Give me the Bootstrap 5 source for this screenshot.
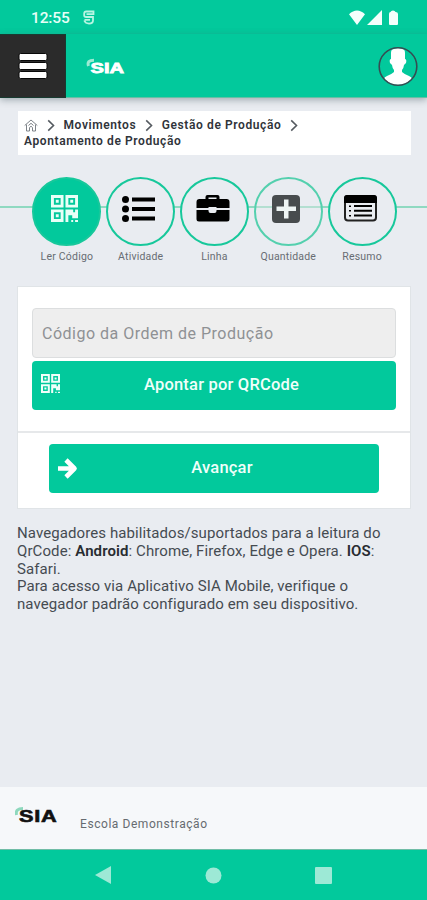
<!DOCTYPE html>
<html lang="pt-BR">
<head>
<meta charset="utf-8">
<meta name="viewport" content="width=device-width, initial-scale=1">
<title>SIA - Apontamento de Produção</title>
<link href="https://cdn.jsdelivr.net/npm/bootstrap@5.3.0/dist/css/bootstrap.min.css" rel="stylesheet">
<style>
  :root { --sia: #02c99c; --sia-line: #8fd9c1; }
  body { font-family: Roboto, "Liberation Sans", sans-serif; background: #e9ecf1; color: #454b51; height: 900px; overflow: hidden; }
  svg { display: block; flex: none; }
  .bg-sia { background: var(--sia); }
  .status-bar { height: 34px; padding: 1px 29px 0 31px; }
  .clock { font-size: 15.5px; font-weight: 500; color: #e6fff7; line-height: 34px; width: 52px; letter-spacing: -.15px; }
  .top-bar { height: 64px; box-shadow: 0 2px 7px rgba(70,90,100,.45); border-bottom: 1px solid #66bfa5; z-index: 2; }
  .menu-btn { width: 66px; height: 64px; background: #2b2b2b; border: 1px solid #173b31; border-left: 0; padding: 0 0 0 18px; }
  .brand { margin-left: 20px; }
  .avatar { margin-right: 9px; }
  .crumbs { margin: 13px 16px 0 18px; height: 44px; padding: 6px 6px 0; line-height: 16px; font-size: 12px; font-weight: 600; color: #30343a; letter-spacing: .6px; }
  .crumb-row { height: 16px; }
  .crumb-chevron { margin: 0 8.5px 0 9px; }
  .steps { margin-top: 22px; padding: 0 28px 0 30px; height: 87px; background: linear-gradient(var(--sia-line), var(--sia-line)) 0 29px / 100% 2px no-repeat; }
  .step { width: 74px; font-size: 10.5px; line-height: 14px; color: #686d73; letter-spacing: .2px; }
  .step-dot { width: 69px; height: 70px; border: 2px solid #17c89b; background: #e9ecf1; color: #000; padding-bottom: 6px; border-radius: 50%; }
  .step-dot.current { background: var(--sia); color: #e8fff7; padding-right: 4px; }
  .step-dot.list { padding-right: 4px; }
  .step-dot.pending { border-color: #54d0ae; color: #484c4e; background: linear-gradient(#b3dfd1, #b3dfd1) 0 27px / 100% 2px no-repeat #e9ecf1; }
  .step-label { margin-top: 4px; }
  .panel { margin: 22px 16px 0 17px; height: 223px; border: 1px solid #e0e4e7; }
  .panel-top { height: 146px; padding: 21px 14px 0; border-bottom: 2px solid #e6e8ea; }
  .code-input { height: 50px; border: 1px solid #dcdedf; background: #eee; font-size: 16px; padding: 0 9px; border-radius: 4px; letter-spacing: .5px; margin-bottom: 3px; }
  .code-input::placeholder { color: #8e9194; }
  .btn-sia, .btn-sia:hover { background: var(--sia); color: #f0fffa; height: 49px; border: 0; border-radius: 4px; font-size: 16.5px; font-weight: 500; letter-spacing: .2px; }
  .btn-sia { padding: 0 9px; }
  .btn-text { padding-right: 4px; }
  .panel-bottom { padding: 11px 31px 0; }
  .notice { margin: 16px 30px 0 17px; font-size: 15px; line-height: 17.75px; letter-spacing: .09px; }
  .notice b { font-weight: 600; color: #282c31; }
  .foot { height: 62px; background: #f6f8fa; padding: 0 15px; font-size: 12px; letter-spacing: .56px; color: #666b70; }
  .foot-text { margin: 12px 0 0 22px; }
  .nav-keys { height: 51px; border-top: 1px solid #70bda6; padding: 0 95px; }
</style>
<script src="https://cdn.jsdelivr.net/npm/bootstrap@5.3.0/dist/js/bootstrap.bundle.min.js"></script>
</head>
<body class="d-flex flex-column">
<svg width="0" height="0" class="position-absolute" aria-hidden="true">
  <defs>
    <symbol id="qr" viewBox="0 0 28 28">
      <path fill="currentColor" fill-rule="evenodd" d="M0 0h13v13H0zM3 3v7h7V3zM5 5h3v3H5zM15 0h13v13H15zM18 3v7h7V3zM20 5h3v3h-3zM0 15h13v13H0zM3 18v7h7v-7zM5 20h3v3H5zM15 15h8v3h2v-3h3v9h-6v-3h-4v7h-3zM21 26h2v2h-2zM25 26h3v2h-3z"/>
    </symbol>
    <symbol id="chev" viewBox="0 0 8 14"><path d="M1 1.5 6.7 7 1 12.5" fill="none" stroke="#555a60" stroke-width="1.7"/></symbol>
  </defs>
</svg>

<div class="status-bar bg-sia d-flex align-items-center flex-shrink-0">
  <span class="clock">12:55</span>
  <svg width="12" height="15" viewBox="0 0 12 15" fill="none" stroke="#b8f5e2" stroke-width="1.8"><path d="M10.500 5V1.500H3.200Q1.200 1.500 1.200 3.500V5.200Q1.200 7 3.200 7H10V10.500Q10 13.500 6 13.600Q2.500 13.500 1.200 10.500M3.500 4.200H10.500M1.500 9.800H7"/></svg>
  <svg class="ms-auto" width="49" height="16" viewBox="0 0 49 16" fill="#f4fffc"><path d="M0 4.300Q8-3.200 16 4.300L8 15zM33 0v15H18zM41.500 2Q42 .5 44 .5T46.500 2Q49 2 49 4v10q0 1-1 1h-7q-1 0-1-1V4q0-2 1.500-2z"/></svg>
</div>

<header class="top-bar bg-sia d-flex align-items-center flex-shrink-0 position-relative">
  <button class="menu-btn d-flex align-items-center" aria-label="Menu">
    <svg width="30" height="28" viewBox="0 0 30 28"><g fill="#fff" stroke="#080808"><rect x="1" y="1.500" width="28" height="7" rx="1.500"/><rect x="1" y="10.500" width="28" height="7" rx="1.500"/><rect x="1" y="19.500" width="28" height="7" rx="1.500"/></g></svg>
  </button>
  <svg class="brand" width="40" height="18" viewBox="0 0 40 18"><path d="M2.500 9Q.5 3.200 8 3.200" fill="none" stroke="#9cebd4" stroke-width="3"/><text x="4.500" y="15.500" font-family="Liberation Sans, sans-serif" font-weight="700" font-size="14.500" textLength="33.500" lengthAdjust="spacingAndGlyphs" fill="#fff" stroke="#fff" stroke-width=".8">SIA</text></svg>
  <svg class="avatar ms-auto" width="42" height="42" viewBox="0 0 42 42"><clipPath id="face"><circle cx="22" cy="21.500" r="18.500"/></clipPath><path clip-path="url(#face)" fill="#fff" d="M15 8Q15 4 18 4Q22 2 26 4Q29 4 29 8V14Q31 14 30 18L28 20Q27.500 24 26 25V27Q28 29 33 31Q38 33 38 41H6Q6 33 11 31Q16 29 18 27V25Q16.500 24 16 20L14 18Q13 14 15 14z"/><circle cx="22" cy="21.500" r="18.800" fill="none" stroke="#354c52" stroke-width="1.600"/></svg>
</header>

<main class="flex-grow-1">
  <nav class="crumbs bg-white" aria-label="Caminho">
    <div class="crumb-row d-flex align-items-center">
      <svg width="14" height="13" viewBox="0 0 14 13" fill="none" stroke="#7e8389"><path d="M.7 6.500 7 1l6.300 5.500M2.500 5.500v6.500h3V8.500Q7 6 8.500 8.500V12h3V5.500M4.500 6.500 7 4.300l2.500 2.200"/></svg>
      <svg class="crumb-chevron" width="8" height="13"><use href="#chev"/></svg>
      <span>Movimentos</span>
      <svg class="crumb-chevron" width="8" height="13"><use href="#chev"/></svg>
      <span>Gestão de Produção</span>
      <svg class="crumb-chevron" width="8" height="13"><use href="#chev"/></svg>
    </div>
    <div>Apontamento de Produção</div>
  </nav>

  <div class="steps d-flex">
    <div class="step d-flex flex-column align-items-center"><div class="step-dot current d-flex align-items-center justify-content-center"><svg width="27" height="27"><use href="#qr"/></svg></div><span class="step-label">Ler Código</span></div>
    <div class="step d-flex flex-column align-items-center"><div class="step-dot list d-flex align-items-center justify-content-center"><svg width="34" height="26" viewBox="0 0 34 26"><circle cx="3.500" cy="3.500" r="3.500"/><circle cx="3.500" cy="13" r="3.500"/><circle cx="3.500" cy="22.500" r="3.500"/><path d="M10 1.500h23v4H10zM10 11h23v4H10zM10 20.500h23v4H10z"/></svg></div><span class="step-label">Atividade</span></div>
    <div class="step d-flex flex-column align-items-center"><div class="step-dot d-flex align-items-center justify-content-center"><svg width="37" height="30" viewBox="0 0 36 30"><path fill-rule="evenodd" d="M9 5V3q0-2 2-2h10q2 0 2 2v2h7q3 0 3 3v6H20v-1h-8v1H0V8q0-3 3-3zM12 5h8V3.500h-8zM0 16h12v1q0 2 2 2h4q2 0 2-2v-1h13v9q0 2.500-2.500 2.500h-28Q0 27.500 0 25z"/></svg></div><span class="step-label">Linha</span></div>
    <div class="step d-flex flex-column align-items-center"><div class="step-dot pending d-flex align-items-center justify-content-center"><svg width="32" height="28" viewBox="0 0 32 28"><rect width="28" height="28" rx="4" fill="currentColor"/><path fill="#eef4f3" d="M12 4.500h4.500v7H24V16h-7.500v7.500H12V16H4.500v-4.500H12z"/></svg></div><span class="step-label">Quantidade</span></div>
    <div class="step d-flex flex-column align-items-center"><div class="step-dot d-flex align-items-center justify-content-center"><svg width="37" height="27" viewBox="0 0 37 27"><rect x="1" y="1" width="31" height="24.500" rx="3" fill="none" stroke="#222" stroke-width="2"/><path d="M0 8V3q0-3 3-3h27q3 0 3 3v5zM5 10.500h2V12H5zM5 15h2v1.500H5zM5 20h2v1.500H5zM10 10h18v2H10zM10 14.700h18v2H10zM10 19.500h18v2H10z"/></svg></div><span class="step-label">Resumo</span></div>
  </div>

  <section class="panel bg-white">
    <div class="panel-top">
      <input class="code-input form-control" placeholder="Código da Ordem de Produção" readonly>
      <button class="btn btn-sia w-100 d-flex align-items-center"><svg width="19" height="19" class="mb-1"><use href="#qr"/></svg><span class="btn-text flex-grow-1 text-center">Apontar por QRCode</span></button>
    </div>
    <div class="panel-bottom">
      <button class="btn btn-sia w-100 d-flex align-items-center"><svg width="20" height="21" viewBox="0 0 20 21" fill="none" stroke="#fff" stroke-width="4.600" stroke-linejoin="round"><path d="M0 10.500h16M8 2l8.500 8.500L8 19"/></svg><span class="btn-text flex-grow-1 text-center">Avançar</span></button>
    </div>
  </section>

  <p class="notice">Navegadores habilitados/suportados para a leitura do<br>QrCode: <b>Android</b>: Chrome, Firefox, Edge e Opera. <b>IOS</b>:<br>Safari.<br>Para acesso via Aplicativo SIA Mobile, verifique o<br>navegador padrão configurado em seu dispositivo.</p>
</main>

<footer class="foot d-flex align-items-center flex-shrink-0">
  <svg class="mb-1" width="43" height="20" viewBox="0 0 43 20"><path d="M1.500 9Q0 2.500 8 2.500" fill="none" stroke="#8ed8bd" stroke-width="3"/><text x="4" y="16" font-family="Liberation Sans, sans-serif" font-weight="700" font-size="16" textLength="38.500" lengthAdjust="spacingAndGlyphs" fill="#111" stroke="#111" stroke-width=".6">SIA</text></svg>
  <span class="foot-text">Escola Demonstração</span>
</footer>
<div class="nav-keys bg-sia d-flex align-items-center justify-content-between flex-shrink-0">
  <svg width="16" height="18" fill="#9de9d6"><path d="M16 0v18L0 9z"/></svg>
  <svg width="17" height="17" fill="#9de9d6"><circle cx="8.500" cy="8.500" r="8"/></svg>
  <svg width="17" height="17" fill="#9de9d6"><rect width="17" height="17" rx="1"/></svg>
</div>
</body>
</html>
